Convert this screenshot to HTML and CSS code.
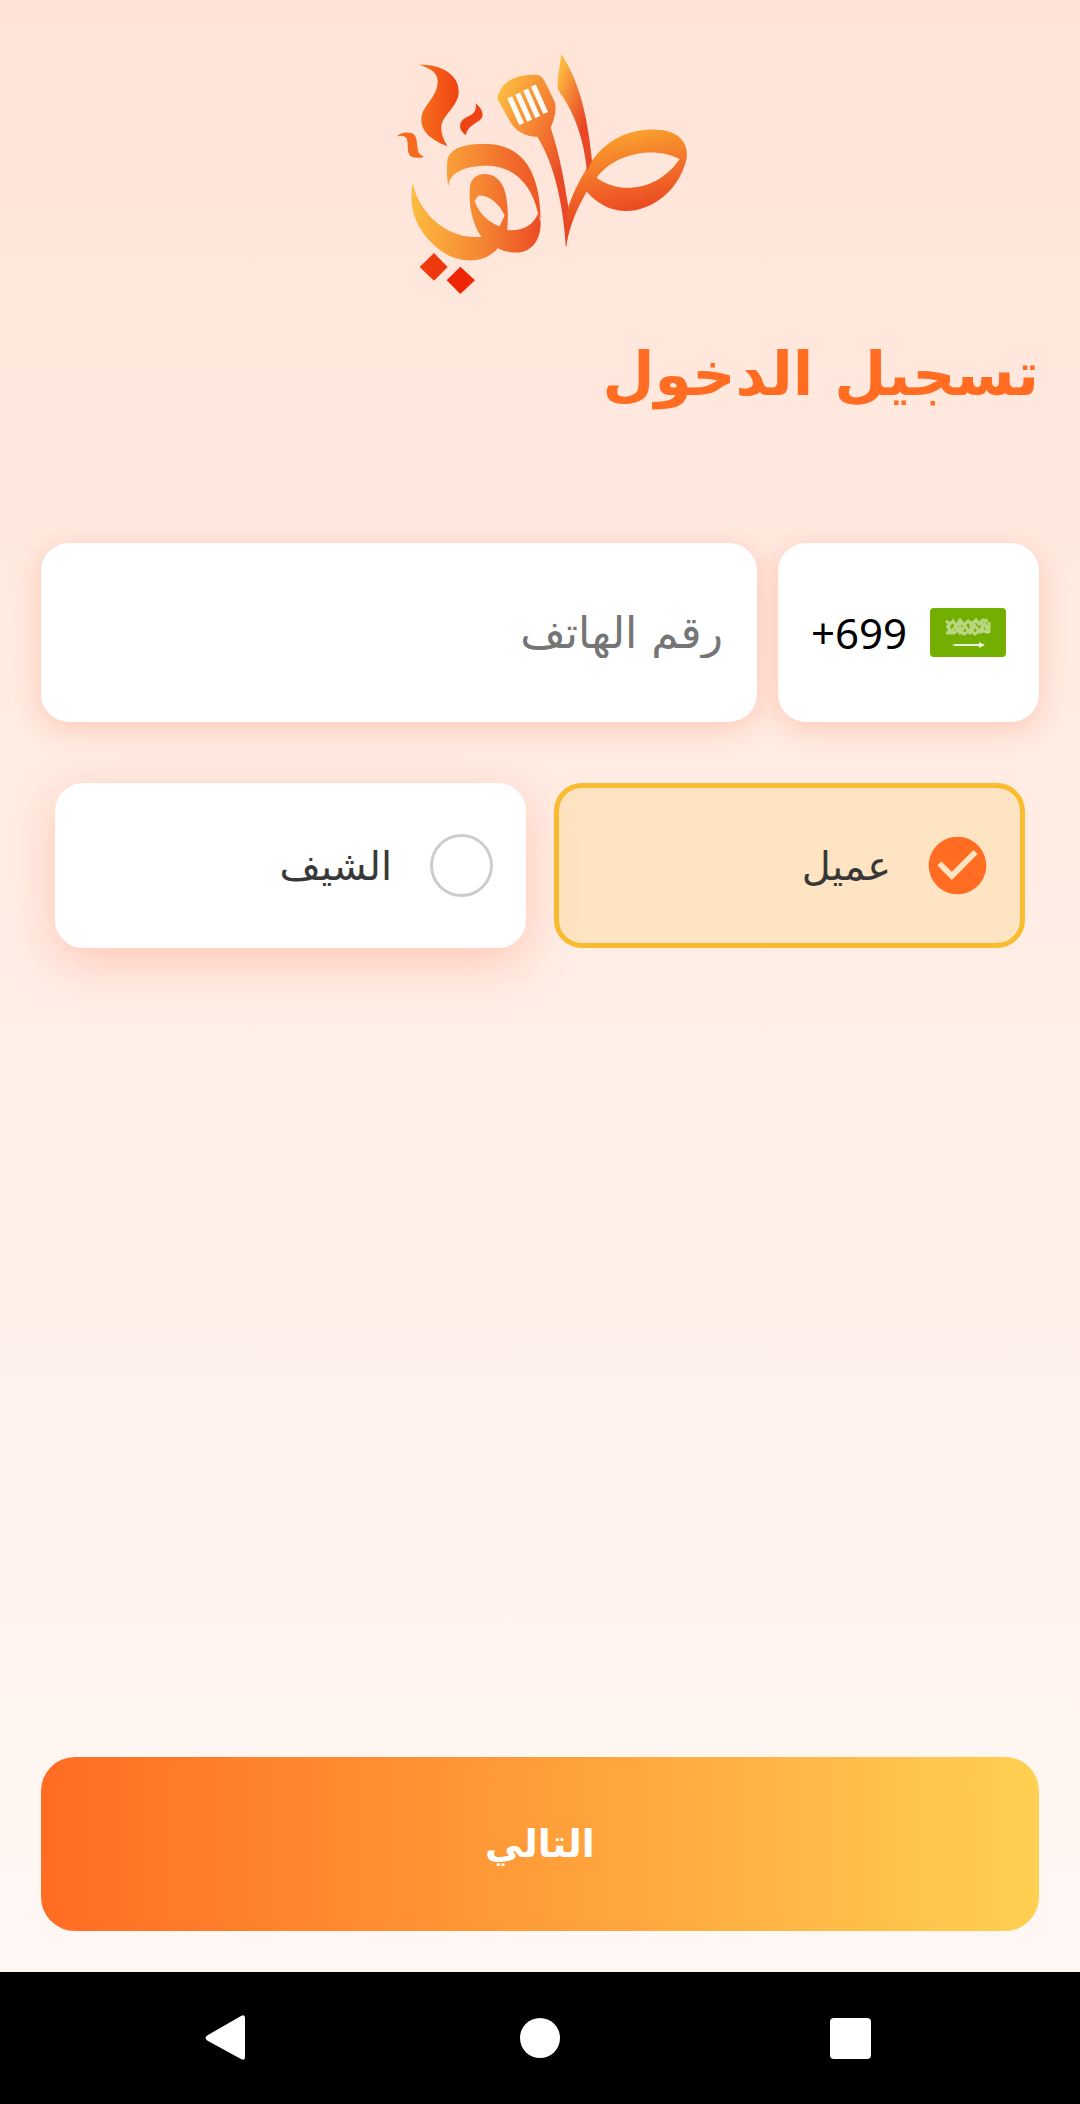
FILE: index.html
```html
<!DOCTYPE html>
<html lang="ar" dir="rtl">
<head>
<meta charset="utf-8">
<meta name="viewport" content="width=device-width, initial-scale=1">
<title>تسجيل الدخول</title>
<link rel="stylesheet" href="styles.css">
</head>
<body>
<main class="login">
  <svg class="logo" viewBox="33 30 894 738" role="img" aria-label="طاهي">
    <defs>
      <linearGradient id="bowl" gradientUnits="userSpaceOnUse" x1="95" y1="0" x2="480" y2="0"><stop offset="0" stop-color="#fdbb40"/><stop offset=".55" stop-color="#f58532"/><stop offset="1" stop-color="#ea4c24"/></linearGradient>
      <linearGradient id="arch" gradientUnits="userSpaceOnUse" x1="200" y1="0" x2="480" y2="0"><stop offset="0" stop-color="#f9a03a"/><stop offset="1" stop-color="#ee5525"/></linearGradient>
      <linearGradient id="leaf" gradientUnits="userSpaceOnUse" x1="740" y1="270" x2="790" y2="510"><stop offset="0" stop-color="#faa42e"/><stop offset=".5" stop-color="#f37329"/><stop offset="1" stop-color="#ea4822"/></linearGradient>
      <linearGradient id="spatula" gradientUnits="userSpaceOnUse" x1="352" y1="180" x2="600" y2="300"><stop offset="0" stop-color="#fdb940"/><stop offset=".6" stop-color="#f37730"/><stop offset="1" stop-color="#e94725"/></linearGradient>
      <linearGradient id="blade" gradientUnits="userSpaceOnUse" x1="530" y1="120" x2="645" y2="165"><stop offset="0" stop-color="#fdb93e"/><stop offset=".6" stop-color="#ef7030"/><stop offset="1" stop-color="#e84826"/></linearGradient>
      <linearGradient id="steam" x1="0" y1="0" x2="1" y2="0"><stop offset="0" stop-color="#f6711f"/><stop offset="1" stop-color="#f04312"/></linearGradient>
    </defs>
    <path fill="url(#steam)" d="M118 74C185 72 238 105 236 156C234 205 181 226 184 267C185 290 194 302 202 319C157 301 123 277 124 238C126 194 171 176 173 126C174 98 152 85 118 74Z"/>
    <path fill="#f7691d" d="M49 290C64 274 84 276 97 280C113 290 109 307 113 328C116 342 121 345 132 351C112 356 93 354 87 342C81 327 86 307 79 294C72 286 61 286 49 290Z"/>
    <path fill="#ee4315" d="M287 190C301 202 311 217 307 230C300 249 265 250 257 286C243 275 236 262 243 247C256 224 293 232 287 190Z"/>
    <path fill="url(#arch)" d="M205 440C200 410 200 385 202 362C207 330 242 312 310 312C420 309 480 385 482 540L474 520C455 430 397 377 320 377C255 377 207 397 205 440Z"/>
    <path fill="url(#bowl)" fill-rule="evenodd" d="M98 428C112 505 187 598 304 591C278 552 264 500 270 438C276 406 305 396 335 406C372 420 389 470 382 570C425 575 461 557 474 520L482 545C483 616 438 648 385 635C373 634 362 631 354 624C308 678 231 666 185 634C120 586 82 520 98 428ZM284 482C289 500 310 541 359 559L374 526C358 492 325 462 295 467Z"/>
    <path fill="#ee390e" d="M162 639L203 681L162 722L119 681Z"/>
    <path fill="#ee2605" d="M241 680L285 721L241 762L200 721Z"/>
    <path fill="url(#spatula)" d="M352 176C361 128 400 102 471 104C484 106 492 118 500 136L524 185C532 213 521 240 512 263C536 334 550 405 565 500L572 540L558 622C549 492 524 374 472 290C436 290 407 274 391 246Z"/>
    <path fill="url(#leaf)" d="M558 622C556 590 558 545 565 500C584 449 603 410 633 367C681 296 751 266 830 269C888 270 927 302 920 355C901 445 820 515 736 513C684 511 648 486 620 455C592 505 568 555 558 622Z"/>
    <path class="logo-gap" d="M650 414C690 350 810 312 899 357C838 447 727 468 650 414Z"/>
    <path fill="url(#blade)" d="M544 43C603 130 625 250 636 363L621 394C612 302 587 222 535 151C529 119 539 88 544 43Z"/>
    <path d="M389 172L425 252M413 161L449 242M437 149L473 231M460 137L497 219" stroke="#fffaf5" stroke-width="16"/>
  </svg>

  <h1 class="title">تسجيل الدخول</h1>

  <form class="form">
    <div class="phone-row">
      <button class="code" type="button" aria-label="رمز الدولة">
        <svg class="flag" viewBox="0 0 76 49" aria-hidden="true">
          <rect width="76" height="49" rx="4" fill="#72af00"/>
          <path d="M16 13l4 3 3-3 3 5 4-6 4 5 4-4 4 4 4-5 3 4 4-4 5 1M17 17l4 7 5-6 4 7 5-7 5 7 5-7 5 6 5-8 4 9M16 25h8l5-4 5 5 6-4 5 4 6-5 7 4M19 15v11M30 12v13M41 13v11M52 12v13M59 14v11" fill="none" stroke="#fff" stroke-opacity=".5" stroke-width="3"/>
          <path d="M22 37l3-1h24v-2l6 3-6 3v-2H25z" fill="#fff" fill-opacity=".85"/>
        </svg>
        <span class="code-text" dir="ltr">+699</span>
      </button>
      <input class="phone" type="tel" dir="rtl" placeholder="رقم الهاتف" aria-label="رقم الهاتف">
    </div>

    <div class="roles">
      <label class="role">
        <input class="role-input" type="radio" name="role" value="client" checked>
        <svg class="role-check" viewBox="0 0 24 24" aria-hidden="true"><path fill="#ff6c22" d="M12 2C6.480 2 2 6.480 2 12s4.480 10 10 10 10-4.480 10-10S17.520 2 12 2zm-2 15l-5-5 1.410-1.410L10 14.170l7.590-7.590L19 8l-9 9z"/></svg>
        <span>عميل</span>
      </label>
      <label class="role">
        <input class="role-input" type="radio" name="role" value="chef">
        <svg class="role-check" viewBox="0 0 24 24" aria-hidden="true"><path fill="#ff6c22" d="M12 2C6.480 2 2 6.480 2 12s4.480 10 10 10 10-4.480 10-10S17.520 2 12 2zm-2 15l-5-5 1.410-1.410L10 14.170l7.590-7.590L19 8l-9 9z"/></svg>
        <span>الشيف</span>
      </label>
    </div>

    <button class="next" type="submit">التالي</button>
  </form>
</main>

<nav class="system-bar" dir="ltr" aria-label="أزرار النظام">
  <button class="system-button" type="button" aria-label="رجوع"><svg viewBox="0 0 48 48"><path d="M6 21L39 2Q43 0 43 4V43Q43 47 39 45L6 27Q1 24 6 21Z"/></svg></button>
  <button class="system-button" type="button" aria-label="الرئيسية"><svg viewBox="0 0 48 48"><circle cx="24" cy="24" r="20"/></svg></button>
  <button class="system-button" type="button" aria-label="التطبيقات"><svg viewBox="0 0 48 48"><rect x="0" y="4" width="41" height="41" rx="4"/></svg></button>
</nav>
</body>
</html>
```
FILE: styles.css
```css
* {
  box-sizing: border-box;
}

body {
  display: flex;
  flex-direction: column;
  min-height: 100vh;
  margin: 0;
  background: linear-gradient(#ffe3d7, #ffede4 40%, #fff0ea 62%, #fff9f6);
  font-family: "DejaVu Sans", sans-serif;
  color: #383838;
}

button,
input {
  margin: 0;
  border: 0;
  font: inherit;
}

.login {
  display: flex;
  flex: 1;
  flex-direction: column;
  padding: 50px 41px 41px;
}

.logo {
  align-self: center;
  width: 298px;
  height: 246px;
}

.logo-gap {
  fill: #fee6da;
}

.title {
  margin: 30px 0 121px;
  font-size: 60px;
  line-height: 96px;
  color: #ff6c22;
}

.form {
  display: flex;
  flex: 1;
  flex-direction: column;
}

.phone-row {
  display: flex;
  gap: 21px;
}

.code,
.phone {
  height: 179px;
  border-radius: 28px;
  background: #fff;
  box-shadow: 0 6px 28px rgba(255, 88, 48, 0.24);
}

.code {
  display: flex;
  align-items: center;
  gap: 23px;
  padding: 0 33px;
  font-family: "Noto Sans", sans-serif;
  font-size: 42px;
  color: #000;
}

.flag {
  width: 76px;
  height: 49px;
}

.phone {
  flex: 1;
  min-width: 0;
  padding: 0 34px;
  font-size: 44px;
}

.phone::placeholder {
  color: #757575;
  opacity: 1;
}

.roles {
  display: grid;
  grid-template-columns: 1fr 1fr;
  gap: 28px;
  margin: 61px 14px;
}

.role {
  display: grid;
  grid-template-columns: 63px 1fr;
  align-items: center;
  gap: 38px;
  height: 165px;
  padding: 0 28px;
  border: 5px solid #fff;
  border-radius: 28px;
  background: #fff;
  box-shadow: 0 14px 50px rgba(255, 88, 48, 0.26);
  font-size: 40px;
}

.role:has(:checked) {
  border-color: #f9bc30;
  background: #fee4c2;
  box-shadow: none;
}

.role-input {
  grid-area: 1 / 1;
  width: 63px;
  height: 63px;
  border: 3px solid #ccc;
  border-radius: 50%;
  appearance: none;
}

.role-input:checked {
  border-color: transparent;
}

.role-check {
  display: none;
  grid-area: 1 / 1;
  justify-self: start;
  width: 69px;
  height: 69px;
}

.role-input:checked + .role-check {
  display: block;
}

.next {
  height: 174px;
  margin-top: auto;
  border-radius: 34px;
  background: linear-gradient(to right, #ff6c22, #ffd051);
  font-size: 38px;
  font-weight: 700;
  color: #fff;
}

.system-bar {
  display: flex;
  justify-content: space-between;
  height: 132px;
  padding: 0 202px;
  background: #000;
}

.system-button {
  display: flex;
  align-items: center;
  padding: 0;
  background: none;
}

.system-button svg {
  width: 48px;
  height: 48px;
  fill: #fff;
}
```
